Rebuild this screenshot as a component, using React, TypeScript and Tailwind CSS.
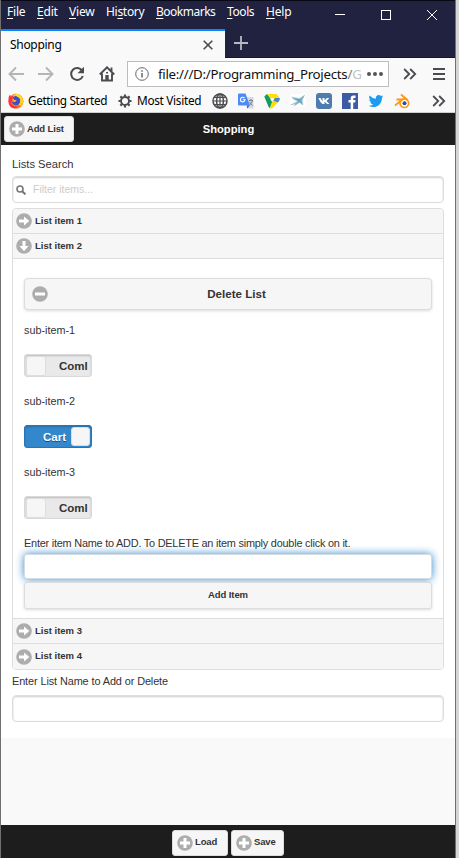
import type { ReactNode } from "react";

function CircleIcon({ kind, className = "" }: { kind: "plus" | "minus" | "right" | "down"; className?: string }) {
  return (
    <svg viewBox="0 0 16 16" className={`size-4 shrink-0 ${className}`}>
      <circle cx="8" cy="8" r="7.8" fill="#adadad" />
      {kind === "plus" && <path d="M6.500 3h3v3.500H13v3H9.500V13h-3V9.500H3v-3h3.500z" fill="#fff" />}
      {kind === "minus" && <path d="M3 6.500h10v3H3z" fill="#fff" />}
      {kind === "right" && <path d="M3 6.500h5V3.500l5.300 4.500L8 12.500V9.500H3z" fill="#fff" />}
      {kind === "down" && <path d="M6.500 3v5h-3L8 13.300 12.500 8h-3V3z" fill="#fff" />}
    </svg>
  );
}

function MenuItem({ pre = "", k, post, className }: { pre?: string; k: string; post: string; className: string }) {
  return (
    <span className={`shrink-0 whitespace-nowrap ${className}`}>
      {pre}
      <span className="underline decoration-1 underline-offset-2">{k}</span>
      {post}
    </span>
  );
}

function Titlebar() {
  return (
    <div className="flex h-[29px] shrink-0 border-t border-[#080816] bg-[#20223f] text-[12px] leading-[21px] text-white">
      <MenuItem k="F" post="ile" className="ml-1.5 w-[30px] tracking-[-0.2px]" />
      <MenuItem k="E" post="dit" className="w-8 tracking-[-0.2px]" />
      <MenuItem k="V" post="iew" className="w-[37px] tracking-[-0.2px]" />
      <MenuItem pre="Hi" k="s" post="tory" className="w-[50px] tracking-[-0.3px]" />
      <MenuItem k="B" post="ookmarks" className="w-[71px] tracking-[-0.5px]" />
      <MenuItem k="T" post="ools" className="w-[39px] tracking-[-0.4px]" />
      <MenuItem k="H" post="elp" className="w-[68px] tracking-[-0.2px]" />
      <svg viewBox="0 0 104 12" className="mt-2 h-3 w-[104px]" fill="none" stroke="#fff" shapeRendering="crispEdges">
        <path d="M1 5.500h10M47.500 1.500h9v9h-9z" />
        <path d="M93 1l10 10M103 1L93 11" shapeRendering="auto" />
      </svg>
    </div>
  );
}

function TabBar() {
  return (
    <div className="flex h-[29px] shrink-0 border-b border-[#151729] bg-[#20223f]">
      <div className="-mb-px flex w-56 items-center justify-between border-t-2 border-[#0a84ff] bg-[#f9f9fa] pr-3 pl-[9px]">
        <span className="pt-px text-[12px] tracking-[-0.3px] text-black">Shopping</span>
        <svg viewBox="0 0 10 10" className="size-[10px]" stroke="#4a4a4f" strokeWidth="1.600">
          <path d="M.700.700l8.600 8.600M9.300.700L.700 9.300" />
        </svg>
      </div>
      <svg viewBox="0 0 14 14" className="mt-[7px] ml-[9px] size-3.5" stroke="#b7b8c2" strokeWidth="1.800">
        <path d="M7 0v14M0 7h14" />
      </svg>
    </div>
  );
}

function Chevrons() {
  return (
    <svg viewBox="0 0 14 12" className="h-3 w-3.5 shrink-0" fill="none" stroke="#4c4c50" strokeWidth="1.800">
      <path d="M1.200 1l5 5-5 5M7.200 1l5 5-5 5" />
    </svg>
  );
}

function NavBar() {
  return (
    <div className="flex h-[31px] shrink-0 items-center bg-[#f9f9fa] pl-[7px]">
      <svg viewBox="0 0 46 16" className="h-4 w-[46px]" fill="none" stroke="#b5b5b7" strokeWidth="1.900">
        <path d="M16 8H1.500M8 1.500L1.500 8 8 14.500M30 8h14.500M38 1.500L44.500 8 38 14.500" />
      </svg>
      <svg viewBox="0 0 16 16" className="ml-[15px] size-4" fill="none" stroke="#4c4c50" strokeWidth="2">
        <path d="M13.200 4.700A6 6 0 1 0 13.800 10" />
        <path d="M15 .700v6.500H8.500z" fill="#4c4c50" stroke="none" />
      </svg>
      <svg viewBox="0 0 16 16" className="ml-3.5 size-4" fill="none" stroke="#4c4c50" strokeWidth="1.900">
        <path d="M.800 8.500L8 1.300l7.200 7.200M3 7.500V14.500h10V7.500M12.500 5V1.500" />
        <path d="M6.300 14V9h3.400v5z" fill="#4c4c50" stroke="none" />
        <path d="M8 6v1.500" />
      </svg>
      <div className="ml-3 flex h-[26px] w-[262px] items-center border border-[#bdbdc0] bg-white pl-[7px]">
        <svg viewBox="0 0 14 14" className="size-3.5 shrink-0" fill="none" stroke="#68686b">
          <circle cx="7" cy="7" r="6.300" />
          <path d="M7 6v4.500M7 3.300v1.500" strokeWidth="1.500" />
        </svg>
        <span className="ml-[9px] w-[205px] overflow-hidden pt-0.5 text-[13.300px] tracking-[-0.280px] whitespace-nowrap text-[#111]">
          file:///D:/Programming_Projects<span className="text-[#777]">/</span><span className="text-[#c4c4c4]">G</span>
        </span>
        <svg viewBox="0 0 16 4" className="ml-1 h-1 w-4 shrink-0" fill="#555559">
          <circle cx="2" cy="2" r="2" /><circle cx="8" cy="2" r="2" /><circle cx="14" cy="2" r="2" />
        </svg>
      </div>
      <div className="ml-3.5"><Chevrons /></div>
      <svg viewBox="0 0 12 12" className="ml-4 size-3" stroke="#4c4c50" strokeWidth="2">
        <path d="M0 1h12M0 6h12M0 11h12" />
      </svg>
    </div>
  );
}

function BookmarkIcons() {
  return (
    <>
      <svg viewBox="0 0 16 16" className="ml-2 size-4" fill="none" stroke="#4c4c50" strokeWidth="1.500">
        <circle cx="8" cy="8" r="7" /><ellipse cx="8" cy="8" rx="3.400" ry="7" /><path d="M8 1v14M1 8h14M2.200 4.300h11.600M2.200 11.700h11.600" strokeWidth="1.200" />
      </svg>
      <svg viewBox="0 0 16 16" className="ml-2.5 size-4">
        <path d="M6 4h9.500v11.500H9z" fill="#d8dadd" /><path d="M0 1.500Q0 .500 1 .500h6.500L12 12.500H1q-1 0-1-1z" fill="#4c8bf5" />
        <path d="M9 12.500h3l-3 3z" fill="#3367d6" />
        <path d="M11 7.500h4M13 6v1.500M14.500 7.500q-.500 3-3 4.500M11.700 9q1 2.500 3 3.500" stroke="#78828c" fill="none" />
        <path d="M6.500 5.100A2.300 2.300 0 1 0 7 6.700H4.800" fill="none" stroke="#fff" strokeWidth="1.100" />
      </svg>
      <svg viewBox="0 0 16 16" className="ml-2.5 size-4">
        <path d="M.300 3.500L3 1l5.500 7L6 15q-1 0-1.600-1.500z" fill="#159a60" />
        <path d="M3 1h9.500l3.200 4H6.300z" fill="#ffe000" />
        <path d="M6 15l3.700-10h6q.300 1.500-.700 3L8.500 15q-1.300 1-2.500 0z" fill="#ffdc00" />
        <path d="M9.500 7.500L11 5h4.700q.300 1.500-.700 3l-1.300 1.500z" fill="#4285e8" />
        <path d="M6 5.500h4L8 9z" fill="#fff" />
      </svg>
      <svg viewBox="0 0 16 16" className="ml-2.5 size-4">
        <path d="M0 1h16v13H0z" fill="#fff" />
        <path d="M1 3.500l8 1.500 6-3.500-2 5 .500 6-3-3L3 14l3.500-5.500L3 6.500z" fill="#c4d7df" />
        <path d="M2 4.500l8 1.500 5-4-3.500 5 1 5.500-3-3.500-5.500 4 4-5z" fill="#62a6c5" />
        <path d="M0 12l6-3 2 1-6 2z" fill="#a5bac3" />
      </svg>
      <svg viewBox="0 0 16 16" className="ml-2.5 size-4">
        <rect width="16" height="16" rx="3" fill="#4c7dae" />
        <path d="M2.500 5h2l2 3.500V5h2v2.300L11 5h2.300l-2.800 3 3 3h-2.300l-2.700-2.200V11H7Q4.500 10.500 2.500 5z" fill="#fff" />
      </svg>
      <svg viewBox="0 0 16 16" className="ml-2.5 size-4">
        <path d="M0 0h16v16H0z" fill="#3c5aa6" />
        <path d="M8.700 16V9.500H6.500V7h2.200V5.200Q8.700 2.500 11.500 2.500h2V5h-1.300q-1 0-1 1v1h2.300l-.400 2.500h-1.900V16z" fill="#fff" />
      </svg>
      <svg viewBox="-1 -1 26 26" className="ml-2.5 size-4">
        <path fill="#1d9bf0" d="M23.950 4.570a10 10 0 0 1-2.820.770 4.960 4.960 0 0 0 2.160-2.720c-.950.560-2 .960-3.130 1.190a4.920 4.920 0 0 0-8.380 4.480A13.900 13.900 0 0 1 1.670 3.150 4.930 4.930 0 0 0 3.200 9.720a4.900 4.900 0 0 1-2.230-.620v.060a4.920 4.920 0 0 0 3.950 4.830 5 5 0 0 1-2.210.080 4.940 4.940 0 0 0 4.600 3.420A9.870 9.870 0 0 1 0 19.540a14 14 0 0 0 7.550 2.210c9.050 0 14-7.500 14-13.980 0-.210 0-.420-.020-.630a9.930 9.930 0 0 0 2.420-2.570z" />
      </svg>
      <svg viewBox="0 0 16 16" className="ml-2.5 size-4" fill="none">
        <circle cx="10.300" cy="10.200" r="4.300" fill="#fff" stroke="#ff9615" strokeWidth="1.700" />
        <path d="M1 12.500L8.500 6.500H2.500M7 1.500l6.500 5.500" stroke="#ff9615" strokeWidth="1.800" />
        <circle cx="10.500" cy="10.200" r="2" fill="#17599c" />
      </svg>
    </>
  );
}

function BookmarksBar() {
  return (
    <div className="flex h-6 shrink-0 items-center border-b border-[#cfcfd0] bg-[#f9f9fa] pl-[7px] text-[12px] text-black">
      <svg viewBox="0 0 16 16" className="size-4 shrink-0">
        <circle cx="8" cy="8.300" r="7.500" fill="#ff7b16" />
        <path d="M2 2.200q2 1 3 0L8 1q4 0 6 3.500Q16.500 9 13.500 13L8 11z" fill="#ffcb22" />
        <path d="M.600 7Q.200 4 2 1.500l.800 2.300Q4 2.500 5.500 3L3 10.500q3 4 8 2.500-4 4-8 1.200Q0 11.500.600 7z" fill="#ff2f43" />
        <path d="M4.700 4.800Q7 2 9.500 3.800q3 1 2.500 5-.500 3.500-4 3.500-4-.500-4-3.800 1.500 1.300 3 .500l1.700-1.700-2.400-.300z" fill="#3e4bd3" />
        <path d="M7.500.500q4 .500 6 3.500 2 3.500.500 6Q13.500 5 10 4 8 2.500 7.500.500z" fill="#ffe226" />
      </svg>
      <span className="ml-1 w-[81px] pt-px text-[11.800px] tracking-[-0.380px] whitespace-nowrap">Getting Started</span>
      <svg viewBox="0 0 16 16" className="ml-2 size-4 shrink-0" fill="none" stroke="#4c4c50">
        <circle cx="8" cy="8" r="4" strokeWidth="1.900" />
        <path d="M8 1.500v2M8 12.500v2M1.500 8h2M12.500 8h2M3.400 3.400l1.400 1.400M11.200 11.200l1.400 1.400M12.600 3.400l-1.400 1.400M4.800 11.200l-1.400 1.400" strokeWidth="2.200" />
      </svg>
      <span className="ml-1 w-[67px] pt-px text-[11.800px] tracking-[-0.300px] whitespace-nowrap">Most Visited</span>
      <BookmarkIcons />
      <div className="ml-[22px]"><Chevrons /></div>
    </div>
  );
}

function ToolButton({ label, className }: { label: string; className: string }) {
  return (
    <button className={`flex h-[26px] items-center rounded-[3px] border border-[#ddd] bg-[#f6f6f6] pl-1 text-[9.500px] font-bold tracking-[-0.150px] text-[#333] ${className}`}>
      <CircleIcon kind="plus" />
      <span className="ml-0.5 whitespace-nowrap">{label}</span>
    </button>
  );
}

function ListRow({ label, open = false, className = "" }: { label: string; open?: boolean; className?: string }) {
  return (
    <div className={`flex h-[25px] items-center border-b border-[#ddd] bg-[#f6f6f6] pl-[3px] text-[9.500px] font-bold text-[#333] ${className}`}>
      <CircleIcon kind={open ? "down" : "right"} />
      <span className="ml-[3px]">{label}</span>
    </div>
  );
}

function Toggle({ on = false }: { on?: boolean }) {
  return on ? (
    <div className="flex h-[23px] w-[68px] items-center justify-end rounded-[3px] border border-[#2b74b1] bg-[#3388cc] text-[11.500px] font-bold text-white shadow-[inset_0_1px_2px_rgba(0,0,0,.2)]">
      <span className="mr-[5px] pt-0.5 [text-shadow:0_1px_0_#005599]">Cart</span>
      <span className="mr-px size-[19px] rounded-[3px] border border-[#ddd] bg-[#f6f6f6]" />
    </div>
  ) : (
    <div className="flex h-[23px] w-[68px] items-center rounded-[3px] border border-[#d9d9d9] bg-[#e9e9e9] text-[11.500px] font-bold text-[#333] shadow-[inset_0_1px_2px_rgba(0,0,0,.2)]">
      <span className="ml-px size-5 shrink-0 rounded-[3px] border border-[#ddd] bg-[#f6f6f6]" />
      <span className="ml-[13px] w-[30px] overflow-hidden pt-0.5 whitespace-nowrap">Coml</span>
    </div>
  );
}

function SubItem({ label, on }: { label: string; on?: boolean }) {
  return (
    <div className="h-[71px]">
      <div className="h-[30px] text-[10.800px] leading-[12px]">{label}</div>
      <Toggle on={on} />
    </div>
  );
}

function Page({ children }: { children: ReactNode }) {
  return <div className="h-[593px] shrink-0 bg-white px-[11px] font-['Liberation_Sans',Arial,sans-serif] text-[#333]">{children}</div>;
}

export default function App() {
  return (
    <div className="flex h-[858px] w-[459px] overflow-hidden bg-[#d5d5d5] font-['Noto_Sans','Open_Sans',sans-serif]">
      <div className="flex w-[456px] shrink-0 flex-col border-x border-[#707070] bg-[#f9f9f9]">
        <Titlebar />
        <TabBar />
        <NavBar />
        <BookmarksBar />
        <header className="grid h-8 shrink-0 grid-cols-[1fr_auto_1fr] items-center bg-[#1d1d1d] pr-0.5 pl-[3px] font-['Liberation_Sans',Arial,sans-serif]">
          <ToolButton label="Add List" className="w-[70px]" />
          <h1 className="text-[11.200px] font-bold text-white">Shopping</h1>
        </header>
        <Page>
          <div className="h-[31px] pt-3 text-[11.200px] leading-[14px]">Lists Search</div>
          <div className="flex h-[27px] items-center rounded-[4px] border border-[#ddd] pl-[3px] shadow-[inset_0_1px_2px_rgba(0,0,0,.2)]">
            <svg viewBox="0 0 10 10" className="size-[10px]" fill="none" stroke="#777" strokeWidth="1.600">
              <circle cx="4" cy="4" r="3" /><path d="M6.200 6.200l3.200 3.200" strokeWidth="2" />
            </svg>
            <span className="ml-[7px] pt-px text-[10.500px] text-[#ccc]">Filter items...</span>
          </div>
          <div className="mt-[5px] overflow-hidden rounded-[4px] border border-[#ddd]">
            <ListRow label="List item 1" />
            <ListRow label="List item 2" open />
            <div className="h-[360px] border-b border-[#ddd] px-[11px] pt-[19px]">
              <button className="flex h-8 w-full items-center rounded-[4px] border border-[#ddd] bg-[#f6f6f6] pr-1.5 pl-[7px] text-[11.600px] font-bold shadow-[0_1px_3px_rgba(0,0,0,.15)]">
                <CircleIcon kind="minus" className="-mt-px" />
                <span className="flex-1 text-center">Delete List</span>
              </button>
              <div className="pt-[14px]">
                <SubItem label="sub-item-1" />
                <SubItem label="sub-item-2" on />
                <SubItem label="sub-item-3" />
              </div>
              <div className="h-[17px] text-[10.900px] leading-[12px] tracking-[-0.220px] whitespace-nowrap">Enter item Name to ADD. To DELETE an item simply double click on it.</div>
              <div className="h-[25px] rounded-[3px] border border-[#d4dce2] bg-white shadow-[0_0_8px_#3388cc]" />
              <button className="mt-[3px] h-[27px] w-full rounded-[3px] border border-[#ddd] bg-[#f6f6f6] text-[9.500px] font-bold tracking-[-0.100px] shadow-[0_1px_3px_rgba(0,0,0,.15)]">Add Item</button>
            </div>
            <ListRow label="List item 3" />
            <ListRow label="List item 4" className="h-6 border-b-0" />
          </div>
          <div className="h-[25px] pt-[5px] text-[10.900px] leading-[12px] tracking-[-0.100px]">Enter List Name to Add or Delete</div>
          <div className="h-[27px] rounded-[4px] border border-[#ddd] shadow-[inset_0_1px_2px_rgba(0,0,0,.2)]" />
        </Page>
        <div className="flex-1" />
        <footer className="flex h-[33px] shrink-0 items-center justify-center gap-[3px] bg-[#1d1d1d] pt-0.5 font-['Liberation_Sans',Arial,sans-serif]">
          <ToolButton label="Load" className="w-14" />
          <ToolButton label="Save" className="w-[53px]" />
        </footer>
      </div>
    </div>
  );
}
